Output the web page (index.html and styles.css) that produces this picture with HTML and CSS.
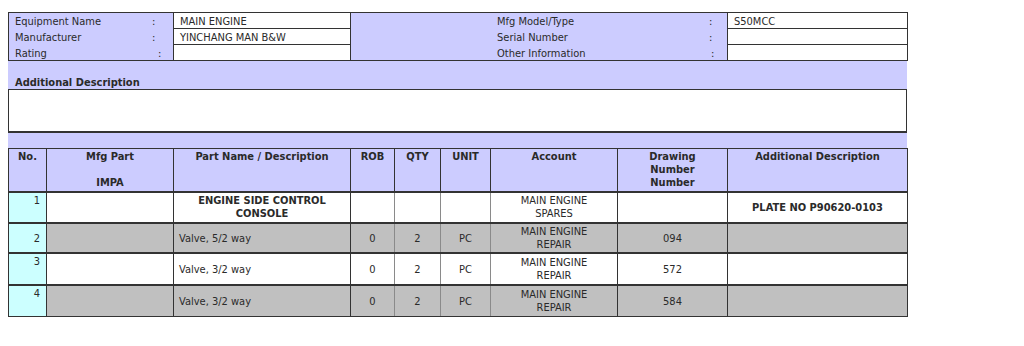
FILE: index.html
```html
<!DOCTYPE html>
<html>
<head>
<meta charset="utf-8">
<link rel="stylesheet" href="styles.css">
</head>
<body>
<div class="page">
  <table class="info">
    <colgroup>
      <col class="c-lbl"><col class="c-val"><col class="c-mid"><col class="c-val2">
    </colgroup>
    <tr>
      <td class="lbl"><span class="k">Equipment Name</span><span class="c">:</span></td>
      <td class="val">MAIN ENGINE</td>
      <td class="mid"><span class="mk">Mfg Model/Type</span><span class="c">:</span></td>
      <td class="val">S50MCC</td>
    </tr>
    <tr>
      <td class="lbl"><span class="k">Manufacturer</span><span class="c">:</span></td>
      <td class="val">YINCHANG MAN B&amp;W</td>
      <td class="mid"><span class="mk">Serial Number</span><span class="c">:</span></td>
      <td class="val"></td>
    </tr>
    <tr>
      <td class="lbl"><span class="k k-wide">Rating</span><span class="c">:</span></td>
      <td class="val"></td>
      <td class="mid"><span class="mk mk-wide">Other Information</span><span class="c">:</span></td>
      <td class="val"></td>
    </tr>
  </table>
  <div class="band band-title">Additional Description</div>
  <div class="desc-box"></div>
  <div class="band band-gap"></div>
  <table class="parts">
    <colgroup>
      <col style="width:38px"><col style="width:127px"><col style="width:177px"><col style="width:44px"><col style="width:46px"><col style="width:50px"><col style="width:127px"><col style="width:110px"><col style="width:180px">
    </colgroup>
    <thead>
      <tr>
        <th>No.</th>
        <th>Mfg Part<br><br>IMPA</th>
        <th>Part Name / Description</th>
        <th>ROB</th>
        <th>QTY</th>
        <th>UNIT</th>
        <th>Account</th>
        <th>Drawing<br>Number<br>Number</th>
        <th>Additional Description</th>
      </tr>
    </thead>
    <tbody>
      <tr class="row-white">
        <td class="no top">1</td>
        <td></td>
        <td class="ctr bold top">ENGINE SIDE CONTROL CONSOLE</td>
        <td></td>
        <td></td>
        <td></td>
        <td class="ctr top">MAIN ENGINE<br>SPARES</td>
        <td></td>
        <td class="ctr bold">PLATE NO P90620-0103</td>
      </tr>
      <tr class="row-grey">
        <td class="no">2</td>
        <td></td>
        <td class="desc">Valve, 5/2 way</td>
        <td class="ctr">0</td>
        <td class="ctr">2</td>
        <td class="ctr">PC</td>
        <td class="ctr">MAIN ENGINE<br>REPAIR</td>
        <td class="ctr">094</td>
        <td></td>
      </tr>
      <tr class="row-white row-tall">
        <td class="no top">3</td>
        <td></td>
        <td class="desc">Valve, 3/2 way</td>
        <td class="ctr">0</td>
        <td class="ctr">2</td>
        <td class="ctr">PC</td>
        <td class="ctr">MAIN ENGINE<br>REPAIR</td>
        <td class="ctr">572</td>
        <td></td>
      </tr>
      <tr class="row-grey row-tall">
        <td class="no top">4</td>
        <td></td>
        <td class="desc">Valve, 3/2 way</td>
        <td class="ctr">0</td>
        <td class="ctr">2</td>
        <td class="ctr">PC</td>
        <td class="ctr">MAIN ENGINE<br>REPAIR</td>
        <td class="ctr">584</td>
        <td></td>
      </tr>
    </tbody>
  </table>
</div>
</body>
</html>
```

FILE: styles.css
```css
html, body {
  margin: 0;
  padding: 0;
  background: #ffffff;
}

body {
  font-family: "DejaVu Sans", Verdana, sans-serif;
  font-stretch: condensed;
  font-size: 11px;
  color: #2a2a2a;
}

.page {
  padding: 12px 8px 8px 8px;
  width: 899px;
}

/* ---------- top info table ---------- */
.info {
  width: 899px;
  table-layout: fixed;
  border-collapse: collapse;
  border: 1px solid #333;
  background: #ccccff;
}

.c-lbl { width: 165px; }
.c-val { width: 177px; }
.c-mid { width: 377px; }
.c-val2 { width: 180px; }

.info td {
  height: 13px;
  padding: 2px 6px 0 6px;
  line-height: 13px;
  white-space: nowrap;
  vertical-align: middle;
}

.info td.val {
  background: #ffffff;
  border: 1px solid #333;
}

.info td.lbl {
  border-right: 1px solid #333;
}

.info td.mid {
  border-right: 1px solid #333;
  padding-left: 146px;
}

.k {
  display: inline-block;
  width: 137px;
}

.k-wide { width: 143px; }

.mk {
  display: inline-block;
  width: 212px;
}

.mk-wide { width: 214px; }

/* ---------- description band ---------- */
.band {
  background: #ccccff;
}

.band-title {
  height: 28px;
  box-sizing: border-box;
  padding: 0 0 0 7px;
  display: flex;
  align-items: flex-end;
  font-weight: bold;
  line-height: 13px;
}

.desc-box {
  height: 41px;
  background: #ffffff;
  border: 1px solid #333;
  border-bottom-width: 2px;
}

.band-gap {
  height: 15px;
}

/* ---------- parts table ---------- */
.parts {
  width: 899px;
  table-layout: fixed;
  border-collapse: collapse;
  border: 1px solid #333;
}

.parts th {
  background: #ccccff;
  border: 1px solid #333;
  border-bottom-width: 2px;
  font-weight: bold;
  text-align: center;
  vertical-align: top;
  line-height: 13px;
  padding: 1px 4px 2px 4px;
  height: 35px;
}

.parts td {
  border: 1px solid #333;
  border-top-width: 2px;
  height: 28px;
  padding: 0 5px;
  line-height: 13px;
  vertical-align: middle;
}

.parts .row-tall td {
  height: 29px;
}

.parts td:nth-child(4),
.parts td:nth-child(5),
.parts td:nth-child(6) {
  border-color: #333 #8a8a8a #333 #8a8a8a;
}

.row-white td { background: #ffffff; }
.row-grey td { background: #c0c0c0; }

.parts td.no {
  background: #ccffff;
  text-align: right;
  padding-right: 6px;
}

.parts td.top {
  vertical-align: top;
  padding-top: 1px;
}

.ctr { text-align: center; }
.bold { font-weight: bold; }
.desc { text-align: left; }
```
